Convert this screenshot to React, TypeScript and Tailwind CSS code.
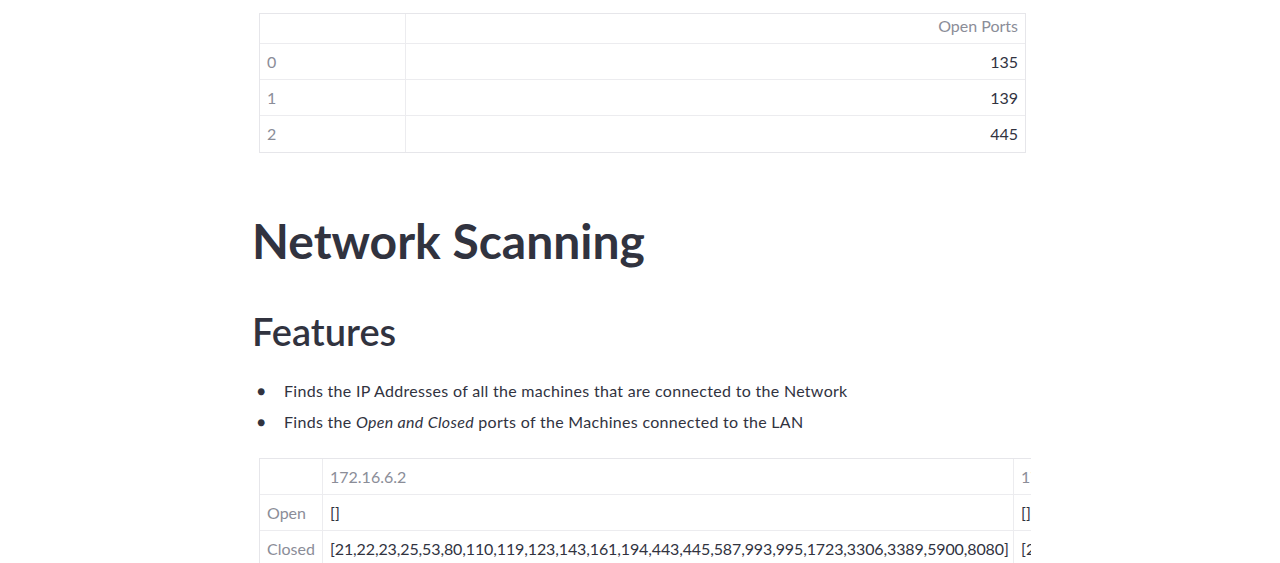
const font = { fontFamily: '"Source Sans Pro", Lato, "Liberation Sans", sans-serif' };

const ports = [
  { idx: "0", val: "135" },
  { idx: "1", val: "139" },
  { idx: "2", val: "445" },
];

export default function App() {
  return (
    <div className="bg-white h-[563px] overflow-hidden text-[#31333f]" style={font}>
      <div className="ml-[252px] w-[779px] pt-[13px]">
        {/* Open ports table */}
        <div className="ml-[7px] w-[767px] border border-[#e6e6ea] text-[16px]">
          <div className="flex h-[30px] border-b border-[#ececef]">
            <div className="w-[146px] border-r border-[#ececef]" />
            <div className="flex-1 flex items-center justify-end pr-[7px] pb-[5px] text-[#8b8d98]">Open Ports</div>
          </div>
          {ports.map((p, i) => (
            <div key={p.idx} className={`flex h-[36px] ${i < 2 ? "border-b border-[#ececef]" : ""}`}>
              <div className="w-[146px] border-r border-[#ececef] flex items-center pl-[7px] text-[#8b8d98]">{p.idx}</div>
              <div className="flex-1 flex items-center justify-end pr-[7px]">{p.val}</div>
            </div>
          ))}
        </div>

        <h1 className="mt-[59px] text-[48px] font-bold leading-[1.2]">Network Scanning</h1>
        <h2 className="mt-[39px] text-[38px] font-semibold leading-[1.2]">Features</h2>

        <ul className="mt-[21px] text-[16px] tracking-[0.3px] leading-[31px]">
          <li className="flex items-center">
            <span className="w-[32px] pl-[5px] text-[14px]">●</span>
            Finds the IP Addresses of all the machines that are connected to the Network
          </li>
          <li className="flex items-center">
            <span className="w-[32px] pl-[5px] text-[14px]">●</span>
            <span>
              Finds the <em>Open and Closed</em> ports of the Machines connected to the LAN
            </span>
          </li>
        </ul>

        {/* Scan results table */}
        <div className="mt-[21px] ml-[7px] w-[772px] overflow-hidden border-t border-l border-[#e6e6ea] text-[16px]">
          <div className="flex h-[36px] border-b border-[#ececef] whitespace-nowrap">
            <div className="w-[63px] shrink-0 border-r border-[#ececef]" />
            <div className="w-[691px] shrink-0 border-r border-[#ececef] flex items-center pl-[7px] text-[#8b8d98]">172.16.6.2</div>
            <div className="shrink-0 flex items-center pl-[7px] text-[#8b8d98]">17</div>
          </div>
          <div className="flex h-[36px] border-b border-[#ececef] whitespace-nowrap">
            <div className="w-[63px] shrink-0 border-r border-[#ececef] flex items-center pl-[7px] text-[#8b8d98]">Open</div>
            <div className="w-[691px] shrink-0 border-r border-[#ececef] flex items-center pl-[7px]">[]</div>
            <div className="shrink-0 flex items-center pl-[7px]">[]</div>
          </div>
          <div className="flex h-[36px] whitespace-nowrap">
            <div className="w-[63px] shrink-0 border-r border-[#ececef] flex items-center pl-[7px] text-[#8b8d98]">Closed</div>
            <div className="w-[691px] shrink-0 border-r border-[#ececef] flex items-center pl-[7px] tracking-[-0.12px]">
              [21,22,23,25,53,80,110,119,123,143,161,194,443,445,587,993,995,1723,3306,3389,5900,8080]
            </div>
            <div className="shrink-0 flex items-center pl-[7px]">[2</div>
          </div>
        </div>
      </div>
    </div>
  );
}
